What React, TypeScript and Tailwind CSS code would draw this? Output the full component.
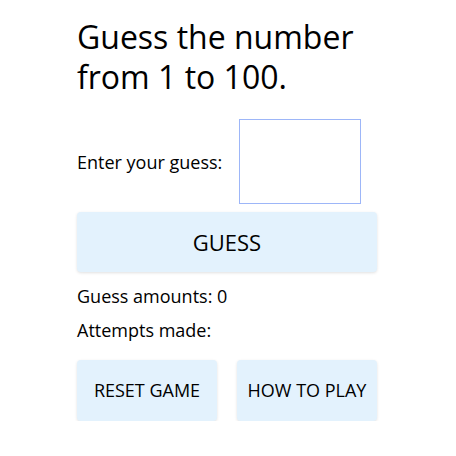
export default function App() {
  return (
    <main
      className="bg-white text-black"
      style={{ fontFamily: '"Open Sans", sans-serif' }}
    >
      <div className="ml-[77px] w-[300px] pt-[17px]">
        <h1 className="text-[32px] leading-[40px] font-normal">
          Guess the number from 1 to 100.
        </h1>

        <div className="mt-[22px] flex items-center gap-[17px]">
          <label className="text-[18px] leading-6">Enter your guess:</label>
          <input
            type="text"
            className="h-[85px] w-[122px] border border-[#9db6f8] bg-white outline-none"
          />
        </div>

        <button className="mt-2 h-[60px] w-full rounded bg-[#e3f2fd] text-[22px] shadow-[0_1px_3px_rgba(0,0,0,0.12)]">
          GUESS
        </button>

        <p className="mt-3 text-[18px] leading-6">Guess amounts: 0</p>
        <p className="mt-[10px] text-[18px] leading-6">Attempts made:</p>

        <div className="mt-[18px] flex gap-5">
          <button className="h-[61px] w-[140px] rounded bg-[#e3f2fd] text-[18px] shadow-[0_1px_3px_rgba(0,0,0,0.12)]">
            RESET GAME
          </button>
          <button className="h-[61px] w-[140px] rounded bg-[#e3f2fd] text-[18px] shadow-[0_1px_3px_rgba(0,0,0,0.12)]">
            HOW TO PLAY
          </button>
        </div>
      </div>
    </main>
  );
}
